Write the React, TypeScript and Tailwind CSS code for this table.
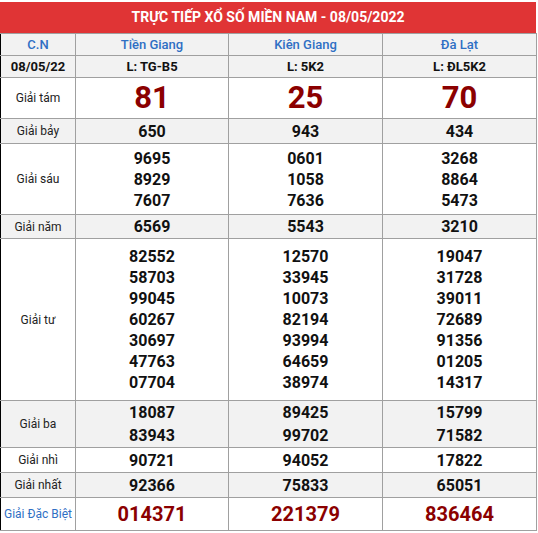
import React from 'react'

type Row = {
  label: string
  values: string[][]
  kind?: 'big' | 'special'
  shaded?: boolean
  height: string
  lineH?: string
}

const rows: Row[] = [
  { label: 'Giải tám', values: [['81'], ['25'], ['70']], kind: 'big', height: 'h-[41px]' },
  { label: 'Giải bảy', values: [['650'], ['943'], ['434']], shaded: true, height: 'h-[25px]' },
  {
    label: 'Giải sáu',
    values: [
      ['9695', '8929', '7607'],
      ['0601', '1058', '7636'],
      ['3268', '8864', '5473'],
    ],
    height: 'h-[71px]',
  },
  { label: 'Giải năm', values: [['6569'], ['5543'], ['3210']], shaded: true, height: 'h-[24px]' },
  {
    label: 'Giải tư',
    values: [
      ['82552', '58703', '99045', '60267', '30697', '47763', '07704'],
      ['12570', '33945', '10073', '82194', '93994', '64659', '38974'],
      ['19047', '31728', '39011', '72689', '91356', '01205', '14317'],
    ],
    height: 'h-[162px]',
  },
  {
    label: 'Giải ba',
    values: [
      ['18087', '83943'],
      ['89425', '99702'],
      ['15799', '71582'],
    ],
    shaded: true,
    height: 'h-[47px]',
    lineH: 'leading-[23px]',
  },
  { label: 'Giải nhì', values: [['90721'], ['94052'], ['17822']], height: 'h-[25px]' },
  { label: 'Giải nhất', values: [['92366'], ['75833'], ['65051']], shaded: true, height: 'h-[25px]' },
  { label: 'Giải Đặc Biệt', values: [['014371'], ['221379'], ['836464']], kind: 'special', height: 'h-[33px]' },
]

export default function App() {
  return (
    <div className="w-[538px] h-[533px] bg-white pt-[2px] font-['Roboto',sans-serif]">
      <div className="w-[536px]">
        {/* Title */}
        <div className="h-[31px] bg-[#e03435] flex items-center justify-center text-white font-bold text-[14px] uppercase">
          Trực tiếp xổ số miền nam - 08/05/2022
        </div>

        <table className="w-[536px] table-fixed border-collapse">
          <colgroup>
            <col className="w-[75px]" />
            <col className="w-[153px]" />
            <col className="w-[154px]" />
            <col className="w-[154px]" />
          </colgroup>
          <tbody>
            {/* Provinces */}
            <tr className="h-[22px] bg-[#f2f2f2] text-[13px] font-medium text-[#2f6fc4]">
              <td className="border border-[#a0a0a0] border-l-black text-center p-0">C.N</td>
              <td className="border border-[#a0a0a0] text-center p-0">Tiền Giang</td>
              <td className="border border-[#a0a0a0] text-center p-0">Kiên Giang</td>
              <td className="border border-[#a0a0a0] text-center p-0">Đà Lạt</td>
            </tr>
            {/* Ticket codes */}
            <tr className="h-[22px] bg-[#f2f2f2] text-[13px] font-bold text-[#111]">
              <td className="border border-[#a0a0a0] border-l-black text-center p-0">08/05/22</td>
              <td className="border border-[#a0a0a0] text-center p-0">L: TG-B5</td>
              <td className="border border-[#a0a0a0] text-center p-0">L: 5K2</td>
              <td className="border border-[#a0a0a0] text-center p-0">L: ĐL5K2</td>
            </tr>

            {rows.map((r) => (
              <tr key={r.label} className={`${r.height} ${r.shaded ? 'bg-[#f2f2f2]' : 'bg-white'}`}>
                <td
                  className={`border border-[#a0a0a0] border-l-black text-center p-0 text-[12px] ${
                    r.kind === 'special' ? 'text-[#2f6fc4]' : 'text-[#222]'
                  }`}
                >
                  {r.label}
                </td>
                {r.values.map((nums, i) => (
                  <td key={i} className="border border-[#a0a0a0] text-center p-0">
                    {nums.map((n) => (
                      <div
                        key={n}
                        className={
                          r.kind === 'big'
                            ? 'text-[31px] leading-[36px] font-bold text-[#8b0000]'
                            : r.kind === 'special'
                            ? 'text-[20px] leading-[26px] font-bold text-[#8b0000]'
                            : `text-[16px] font-bold text-[#111] ${r.lineH ?? 'leading-[21px]'}`
                        }
                      >
                        {n}
                      </div>
                    ))}
                  </td>
                ))}
              </tr>
            ))}
          </tbody>
        </table>
      </div>
    </div>
  )
}
